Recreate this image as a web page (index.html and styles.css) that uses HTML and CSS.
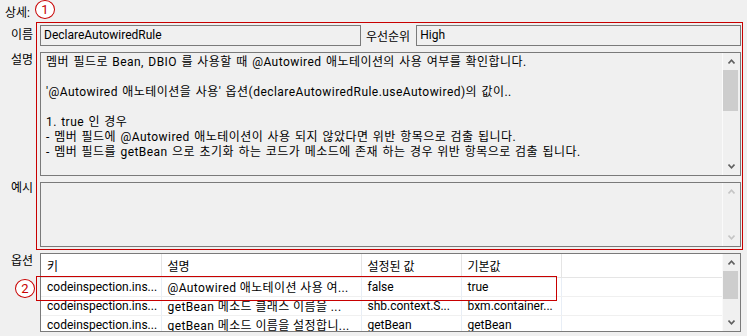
FILE: index.html
```html
<!DOCTYPE html>
<html lang="ko">
<head>
    <meta charset="utf-8">
    <title>상세</title>
    <link rel="stylesheet" href="styles.css">
</head>
<body>
    <div class="panel">
        <div class="title">상세:</div>

        <div class="form">
            <div class="lbl lbl-name">이름</div>
            <div class="name-row">
                <div class="field name">DeclareAutowiredRule</div>
                <span class="inline-lbl">우선순위</span>
                <div class="field prio">High</div>
            </div>

            <div class="lbl">설명</div>
            <div class="box">
                <div class="box-text">멤버 필드로 Bean, DBIO 를 사용할 때 @Autowired 애노테이션의 사용 여부를 확인합니다.

'@Autowired 애노테이션을 사용' 옵션(declareAutowiredRule.useAutowired)의 값이..

1. true 인 경우
- 멤버 필드에 @Autowired 애노테이션이 사용 되지 않았다면 위반 항목으로 검출 됩니다.
- 멤버 필드를 getBean 으로 초기화 하는 코드가 메소드에 존재 하는 경우 위반 항목으로 검출 됩니다.</div>
                <div class="vscroll">
                    <div class="arrow"><svg width="7" height="5" viewBox="0 0 7 5"><polyline points="0.5,4.5 3.5,1.2 6.5,4.5" /></svg></div>
                    <div class="track"><div class="thumb thumb-desc"></div></div>
                    <div class="arrow"><svg width="7" height="5" viewBox="0 0 7 5"><polyline points="0.5,0.5 3.5,3.8 6.5,0.5" /></svg></div>
                </div>
            </div>

            <div class="lbl lbl-ex">예시</div>
            <div class="box">
                <div class="box-text"></div>
                <div class="vscroll off">
                    <div class="arrow"><svg width="7" height="5" viewBox="0 0 7 5"><polyline points="0.5,4.5 3.5,1.2 6.5,4.5" /></svg></div>
                    <div class="track"></div>
                    <div class="arrow"><svg width="7" height="5" viewBox="0 0 7 5"><polyline points="0.5,0.5 3.5,3.8 6.5,0.5" /></svg></div>
                </div>
            </div>

            <div class="lbl">옵션</div>
            <div class="box grid-box">
                <div class="table-wrap">
                    <table>
                        <colgroup>
                            <col class="c-key">
                            <col class="c-desc">
                            <col class="c-val">
                            <col class="c-val">
                            <col>
                        </colgroup>
                        <thead>
                            <tr><th>키</th><th>설명</th><th>설정된 값</th><th>기본값</th><th class="last"></th></tr>
                        </thead>
                        <tbody>
                            <tr><td>codeinspection.ins...</td><td class="kr">@Autowired 애노테이션 사용 여...</td><td>false</td><td>true</td><td class="last"></td></tr>
                            <tr><td>codeinspection.ins...</td><td class="kr">getBean 메소드 클래스 이름을 ...</td><td>shb.context.S...</td><td>bxm.container...</td><td class="last"></td></tr>
                            <tr><td>codeinspection.ins...</td><td class="kr">getBean 메소드 이름을 설정합니...</td><td>getBean</td><td>getBean</td><td class="last"></td></tr>
                        </tbody>
                    </table>
                </div>
                <div class="vscroll">
                    <div class="arrow"><svg width="7" height="5" viewBox="0 0 7 5"><polyline points="0.5,4.5 3.5,1.2 6.5,4.5" /></svg></div>
                    <div class="track"><div class="thumb thumb-grid"></div></div>
                    <div class="arrow"><svg width="7" height="5" viewBox="0 0 7 5"><polyline points="0.5,0.5 3.5,3.8 6.5,0.5" /></svg></div>
                </div>
            </div>
        </div>

        <!-- annotation marks -->
        <div class="hl hl-1"></div>
        <div class="mark mark-1">1</div>
        <div class="hl hl-2"></div>
        <div class="mark mark-2">2</div>
    </div>
</body>
</html>
```

FILE: styles.css
```css
* {
    box-sizing: border-box;
}

body {
    margin: 0;
    background-color: #f0f0f0;
    font-family: Roboto, "Noto Sans CJK KR", sans-serif;
    font-size: 12px;
    color: #000;
}

.panel {
    position: relative;
    width: 747px;
    height: 336px;
    overflow: hidden;
}

.title {
    height: 25px;
    line-height: 26px;
    padding-left: 5px;
}

.form {
    display: grid;
    grid-template-columns: 40px 701px;
    grid-template-rows: 21px 124px 65px 79px;
    row-gap: 6px;
}

.lbl {
    text-align: right;
    padding-right: 7px;
    line-height: 16px;
}

.lbl-name {
    line-height: 21px;
}

.lbl-ex {
    margin-top: -2px;
}

.name-row {
    display: flex;
    align-items: center;
}

.field {
    height: 21px;
    line-height: 19px;
    padding-left: 3px;
    border: 1px solid #7a7a7a;
    background-color: #f0f0f0;
}

.name {
    width: 321px;
}

.inline-lbl {
    margin: 0 6px 0 5px;
}

.prio {
    flex: 1;
}

.box {
    display: flex;
    border: 1px solid #7a7a7a;
    background-color: #f0f0f0;
    overflow: hidden;
}

.box-text {
    flex: 1;
    padding: 2px 5px;
    line-height: 15px;
    white-space: pre-line;
    letter-spacing: 0.45px;
    word-spacing: 1px;
}

.vscroll {
    width: 18px;
    display: flex;
    flex-direction: column;
    border-left: 1px solid #fafafa;
}

.arrow {
    height: 17px;
    display: flex;
    align-items: center;
    justify-content: center;
    padding-right: 1px;
}

.arrow polyline {
    fill: none;
    stroke: #606060;
    stroke-width: 1.6;
}

.off .arrow polyline {
    stroke: #c5c5c5;
}

.track {
    flex: 1;
}

.thumb {
    width: 15px;
    background-color: #cdcdcd;
}

.thumb-desc {
    height: 41px;
}

.thumb-grid {
    height: 28px;
}

.grid-box {
    background-color: #fff;
}

.grid-box .vscroll {
    background-color: #f0f0f0;
}

.table-wrap {
    flex: 1;
    overflow: hidden;
}

table {
    width: 681px;
    border-collapse: collapse;
    table-layout: fixed;
}

.c-key {
    width: 120px;
}

.c-desc {
    width: 200px;
}

.c-val {
    width: 100px;
}

th,
td {
    padding: 0 6px;
    text-align: left;
    font-weight: normal;
    white-space: nowrap;
    overflow: hidden;
}

th {
    height: 23px;
    border-right: 1px solid #e5e5e5;
    border-bottom: 1px solid #e5e5e5;
}

td {
    height: 19px;
    border-right: 1px solid #e8eef6;
    border-bottom: 1px solid #f0f0f0;
}

td.kr {
    letter-spacing: 0.4px;
}

th.last,
td.last {
    border-right: none;
}

/* red annotation overlay */
.hl {
    position: absolute;
    border: 1px solid #c80000;
}

.hl-1 {
    left: 36px;
    top: 22px;
    width: 707px;
    height: 228px;
}

.hl-2 {
    left: 36px;
    top: 276px;
    width: 521px;
    height: 25px;
}

.mark {
    position: absolute;
    width: 20px;
    height: 19px;
    border: 1px solid #c80000;
    border-radius: 50%;
    background-color: #fff;
    color: #c80000;
    font-size: 13px;
    line-height: 17px;
    text-align: center;
}

.mark-1 {
    left: 35px;
    top: 0;
}

.mark-2 {
    left: 15px;
    top: 279px;
}
```
